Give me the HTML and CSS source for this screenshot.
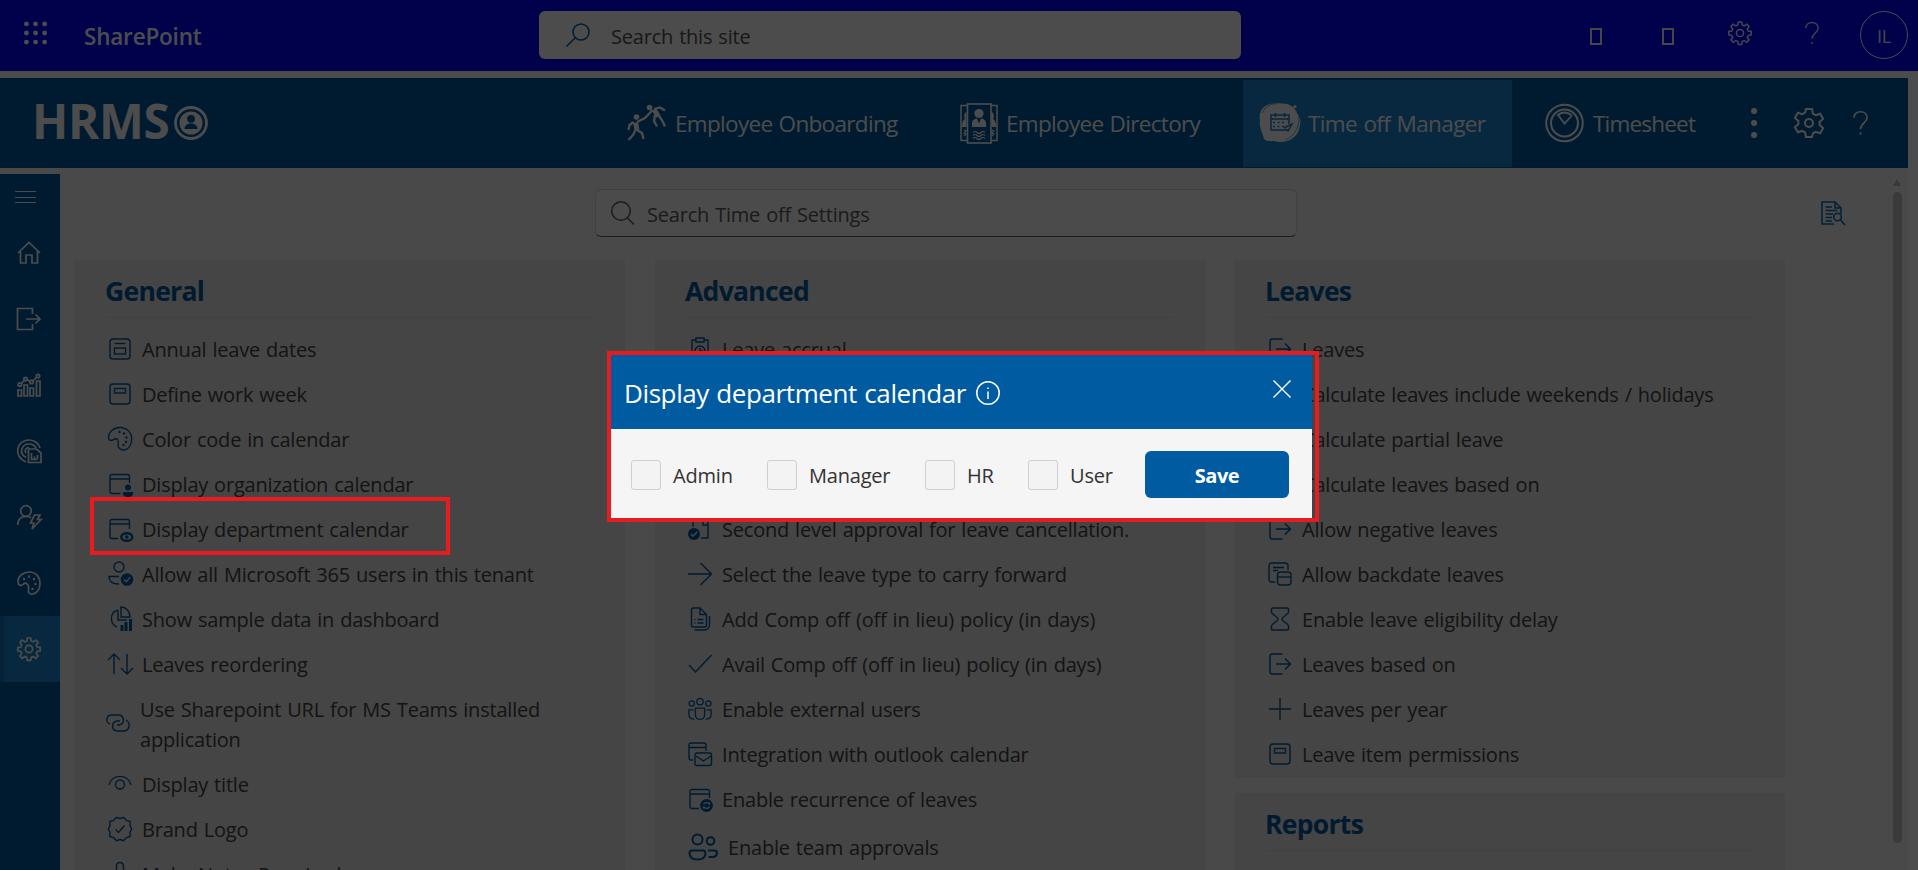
FILE: index.html
```html
<!DOCTYPE html>
<html lang="en">
<head>
<meta charset="utf-8">
<title>Time off Settings</title>
<link rel="stylesheet" href="styles.css">
</head>
<body>
<svg class="defs" width="0" height="0">
  <symbol id="gear" viewBox="0 0 24 24"><path d="M10.3 1h3.4l.5 3 2 .9 2.6-1.800 2.300 2.300-1.800 2.600.9 2 3 .5v3.400l-3 .5-.9 2 1.800 2.600-2.300 2.300-2.600-1.800-2 .9-.5 3h-3.400l-.5-3-2-.9-2.600 1.800-2.300-2.300 1.800-2.600-.9-2-3-.5v-3.400l3-.5.9-2-1.800-2.600 2.300-2.300 2.600 1.800 2-.9z"/><circle cx="12" cy="12" r="3.600"/></symbol>
  <symbol id="cog" viewBox="0 0 30 30"><path d="M12 1h6l.9 4.600 2.800 1.600 4.400-1.500 3 5.200-3.500 3v3.200l3.500 3-3 5.200-4.400-1.500-2.800 1.600L18 29h-6l-.9-4.600-2.800-1.600-4.400 1.500-3-5.200 3.500-3v-3.200l-3.500-3 3-5.200 4.400 1.500 2.800-1.600z"/><circle cx="15" cy="15" r="4"/></symbol>
  <symbol id="help" viewBox="0 0 16 26"><path d="M1 7.500C1 3.500 4 1 8 1s7 2.500 7 6.500c0 5-7 6-7 12"/><path d="M8 23v2.500"/></symbol>
  <symbol id="exit" viewBox="0 0 24 24"><path d="M14.500 2H4.500a2.500 2.500 0 0 0-2.500 2.500v15a2.500 2.500 0 0 0 2.500 2.500h10M8 12h14.500M17 6.500l5.500 5.500-5.500 5.500"/></symbol>
  <symbol id="page-lines" viewBox="0 0 24 24"><rect x="2" y="2" width="20" height="20" rx="3"/><path d="M6.500 6.500h11"/><rect x="6.500" y="11" width="11" height="6"/></symbol>
  <symbol id="page-box" viewBox="0 0 24 24"><rect x="2" y="2" width="20" height="20" rx="3"/><rect x="6.500" y="6.500" width="11" height="4.500"/></symbol>
  <symbol id="palette" viewBox="0 0 24 24"><path d="M.5 11C.5 5 5.500.5 12 .5 18.500.5 24 5.500 23.700 12.500c-.3 6.500-4 11-9 10.500-3.700-.5-5.200-3.500-4.500-6.500.7-3.500-1-5.500-3.500-4.500-1.500.7-2 1.500-3.500 1.500S.5 12.500.5 11z"/><path class="dots" d="M11.500 5v.1M16 6.500v.1M18.500 10.500v.1M18 15v.1M15.500 18v.1"/></symbol>
  <symbol id="palette-side" viewBox="0 0 24 24"><path d="M1 11C1 5 6 1 12.500 1 19 1 23 6 23 13c0 6-4 10.500-9 10-4-.5-2-4-2.500-7.500-.5-3-3-4.500-5-2.500-2.500 2.500-5.500 1.500-5.500-2z"/><path class="dots" d="M7 8v.1M12 5.500v.1M17 8v.1M18.500 13v.1M15.500 18v.1"/></symbol>
  <symbol id="cal-person" viewBox="0 0 24 24"><path d="M12.500 21.500H4a2 2 0 0 1-2-2v-15a2 2 0 0 1 2-2h15.500a2 2 0 0 1 2 2V11M2 7h19.500"/><path class="solid" d="M20 12.500a3 3 0 1 1 0 6 3 3 0 0 1 0-6zM15 20h10v2c0 4-10 4-10 0z"/></symbol>
  <symbol id="cal-eye" viewBox="0 0 24 24"><path d="M10 21.500H4a2 2 0 0 1-2-2v-15a2 2 0 0 1 2-2h15.500a2 2 0 0 1 2 2V12M2 7h19.500"/><ellipse cx="18.800" cy="20" rx="5.500" ry="3.800" stroke-width="2.400"/><circle class="solid" cx="18.800" cy="20" r="1.800"/></symbol>
  <symbol id="person-check" viewBox="0 0 24 24"><circle cx="11" cy="5" r="5"/><path d="M11 22C5 22 1 20 1 14.500h10"/><circle class="solid" cx="19" cy="17.500" r="6.300"/><path class="cut" d="m16 17.500 2.200 2.200 4-4.500"/></symbol>
  <symbol id="pie-bars" viewBox="0 0 24 24"><path d="M10 3a9 9 0 0 0-1 17M13 0v10h9C22 4 18 0 13 0zM10 3v10h9"/><path d="M14 24v-6M18 24v-9M22.500 24V12" stroke-width="3"/></symbol>
  <symbol id="updown" viewBox="0 0 24 24"><path d="M6 22V2M0 8l6-6 6 6M19 2v20M13 16l6 6 6-6"/></symbol>
  <symbol id="link" viewBox="0 0 24 24"><path d="M4 13C-1 11 0 4 6 4h6c7 0 7 9 1 10h-2M20 9c5 3 4 11-3 11h-5C5 20 5 11 11 10h3"/></symbol>
  <symbol id="eye" viewBox="0 0 24 24"><path d="M1 13C4 1.500 20 1.500 23 13"/><circle cx="12" cy="12.500" r="4.500"/></symbol>
  <symbol id="badge" viewBox="0 0 24 24"><path stroke-linejoin="round" d="m12 1.500 3.500-1.200 2.800 3 4 1.200-.3 4.300 1.700 3.200-1.700 3.200.3 4.300-4 1.200-2.800 3L12 22.500l-3.500 1.200-2.800-3-4-1.200.3-4.300L.3 12 2 8.800l-.3-4.300 4-1.200 2.800-3z"/><path d="m7.500 12.500 3 3 6-7"/></symbol>
  <symbol id="note" viewBox="0 0 24 24"><path d="M8.500 24V4a3.500 3.500 0 0 1 7 0v20"/></symbol>
  <symbol id="clip-clock" viewBox="0 0 24 24"><path d="M8 3H4v20h16V3h-4M8 1h8v4H8z"/><circle cx="12" cy="14" r="5"/><path d="M12 11v3h3"/></symbol>
  <symbol id="check-page" viewBox="0 0 24 24"><path d="M5 10V3h15v18h-7M15 3v5h5"/><circle class="solid" cx="6" cy="17" r="6"/><path class="cut" d="m3 17 2.200 2.200 4-4.500"/></symbol>
  <symbol id="arrow" viewBox="0 0 24 24"><path d="M0 12h23.500M12.500 1 23.500 12 12.500 23"/></symbol>
  <symbol id="pages" viewBox="0 0 24 24"><path d="M5.500 1H12l6.500 6.500V18a2 2 0 0 1-2 2h-11a2 2 0 0 1-2-2V3a2 2 0 0 1 2-2zM12 1v6.500h6.500M21.500 9v9a5 5 0 0 1-5 5H6.500M9.500 12.500h6M9.500 16h6M6.500 12.500h1M6.500 16h1"/></symbol>
  <symbol id="check" viewBox="0 0 24 24"><path d="m1 13 6.500 7L23.500 3"/></symbol>
  <symbol id="group" viewBox="0 0 26 24"><circle cx="13" cy="4" r="3.500"/><circle cx="4" cy="6" r="2.800"/><circle cx="22" cy="6" r="2.800"/><path d="M8 11h10v7c0 7-10 7-10 0zM6 13H1v5c0 4 3 5 6 5M20 13h5v5c0 4-3 5-6 5"/></symbol>
  <symbol id="cal-mail" viewBox="0 0 24 24"><path d="M5 18H3a2 2 0 0 1-2-2V3a2 2 0 0 1 2-2h13a2 2 0 0 1 2 2v6M1 5.500h17"/><rect x="7" y="11" width="16.500" height="12.500" rx="2"/><path d="m8 14 7.500 5 7.500-5"/></symbol>
  <symbol id="cal-sync" viewBox="0 0 24 24"><path d="M11 21.500H4a2 2 0 0 1-2-2v-15a2 2 0 0 1 2-2h15.500a2 2 0 0 1 2 2V11M2 7h19.500"/><circle class="solid" cx="18.500" cy="18.500" r="6.400"/><path class="cut" d="M15.500 17.500c1-2.500 5-2.500 6 0v-2M21.500 19.500c-1 2.500-5 2.500-6 0v2"/></symbol>
  <symbol id="team" viewBox="0 0 30 28"><circle cx="9.500" cy="6.500" r="5"/><circle cx="22.500" cy="8" r="3.800"/><path d="M4 17.500h11a2.500 2.500 0 0 1 2.500 2.500c0 4-3 6.500-8 6.500S1.500 24 1.500 20A2.500 2.500 0 0 1 4 17.500zM20 17.500h6.500a2.500 2.500 0 0 1 2.500 2.500c0 3.500-3 4.500-8.500 4"/></symbol>
  <symbol id="date-back" viewBox="0 0 24 24"><path d="M7 20H3.500A2.500 2.500 0 0 1 1 17.500v-14A2.500 2.500 0 0 1 3.500 1h14A2.500 2.500 0 0 1 20 3.500V8M5 5.500h11M5 8.500h5"/><rect x="9.500" y="10" width="13.500" height="13" rx="3"/><path d="M9.500 15H23"/></symbol>
  <symbol id="hourglass" viewBox="0 0 24 24"><path stroke-linejoin="round" d="M4.500 1h15a1 1 0 0 1 1 1v3c0 3-6.500 4-6.500 7s6.500 4 6.500 7v3a1 1 0 0 1-1 1h-15a1 1 0 0 1-1-1v-3c0-3 6.500-4 6.500-7S3.500 8 3.500 5V2a1 1 0 0 1 1-1z"/></symbol>
  <symbol id="plus" viewBox="0 0 24 24"><path d="M12 1v22M1 12h22"/></symbol>
</svg>

<header class="suite">
  <svg class="waffle" viewBox="0 0 24 24"><path d="M2.500 2.500h.1M12 2.500h.1M21.500 2.500h.1M2.500 12h.1M12 12h.1M21.500 12h.1M2.500 21.500h.1M12 21.500h.1M21.500 21.500h.1"/></svg>
  <div class="product">SharePoint</div>
  <div class="site-search"><svg class="i24" viewBox="0 0 24 24"><circle cx="15" cy="9" r="8"/><path d="M9.500 14.500.5 23.500"/></svg><span>Search this site</span></div>
  <div class="suite-tools">
    <i class="tofu"></i><i class="tofu second"></i>
    <svg class="i24 t-gear"><use href="#gear"/></svg>
    <svg class="t-help"><use href="#help"/></svg>
    <div class="avatar">IL</div>
  </div>
</header>

<nav class="hrms">
  <div class="logo"><span>HRMS</span><svg viewBox="0 0 34 34"><circle cx="17" cy="17" r="15.500" fill="none" stroke="#fff" stroke-width="2.800"/><circle cx="17" cy="17" r="11.500" fill="#fff" stroke="none"/><circle cx="17" cy="12.800" r="3.900" fill="#005ba1" stroke="none"/><path d="M10.500 23c-.5-7.500 13.500-7.500 13 0z" fill="#005ba1" stroke="none"/></svg></div>
  <a class="tab onboarding"><svg viewBox="0 0 40 38"><g fill="#fff" stroke="none"><circle cx="22.500" cy="3.500" r="2.800"/><circle cx="9.500" cy="13" r="2.800"/></g><path d="M8.500 18.500 10 26M27 5.500l4.500 7" stroke-width="5"/><path d="m9 25-3 6-4.500 5M10 26l5 3 1.500 6M6.500 18l-4 3-1 5M10 18l8-4 7.500-8M27 5l6-1.500 5 3M28 11l-1 6 3 5.500M32 12l3.500 5 2.500 5.500" stroke-width="2.300"/></svg><span>Employee Onboarding</span></a>
  <a class="tab directory"><svg viewBox="0 0 38 41"><path d="M7 2.500H1v35h6M31 2.500h6v35h-6" stroke-width="1.500"/><rect x="7.500" y="1" width="23.500" height="39" stroke-width="1.600"/><g fill="#fff" stroke="none"><circle cx="19" cy="10.500" r="4.600"/><path d="M12 24v-4c0-3 3-4.500 5-4.500l2 5 2-5c2 0 5 1.500 5 4.500v4zM6.500 9C3.500 10 4 15 5 16c-2 1-3 3-3 8h4.500zM31.500 9c3 1 2.500 6 1.500 7 2 1 3 3 3 8h-4.500z"/></g><path d="M13 29.500q2-2 4 0t4 0 4 0M13 32.500q2-2 4 0t4 0 4 0M13 35.500q2-2 4 0t4 0 4 0M4 27l2 1-2 2 2 1-2 2M32 27l2 1-2 2 2 1-2 2" stroke-width="1.100"/></svg><span>Employee Directory</span></a>
  <a class="tab timeoff"><svg viewBox="0 0 42 40"><path d="M8 2C1 6 0 12 1 18c-1 8 3 12 4 18 3 3 7 2 10 2 12 4 24-4 25-12 2-6 2-10-1-14C36 4 31 0 22 .5 17 0 12 0 8 2z" fill="#fff" stroke="none"/><circle cx="36" cy="3.500" r="1.600" fill="#fff" stroke="none"/><path d="M3 10C7 2 14 0 18 1M39.500 13c2 8-3 20-13 24" stroke="#1b82cf" stroke-width=".7"/><path d="M28 27H12V12h18v9M12 16h18M16.500 10v4M25.500 10v4M14 19.500h2M18.500 19.500h2M23 19.500h2M14 23.500h2M18.500 23.500h2M23 23.500h2M25 25l8-4-4 7-2-2" stroke="#1b82cf" stroke-width="1.500"/></svg><span>Time off Manager</span></a>
  <a class="tab timesheet"><svg viewBox="0 0 39 40"><circle cx="19.500" cy="20" r="18.300"/><circle cx="19.500" cy="20" r="13.500" stroke-width="2"/><path d="M12 12.500q7.500-6 15 0M13 12l6.500 8.500L26.500 13" stroke-width="1.800"/></svg><span>Timesheet</span></a>
  <svg class="more" viewBox="0 0 8 32"><path d="M4 4h.1M4 16h.1M4 28h.1"/></svg>
  <svg class="n-cog"><use href="#cog"/></svg>
  <svg class="n-help"><use href="#help"/></svg>
</nav>

<div class="workspace">
  <aside class="side">
    <div class="burger"></div>
    <a><svg viewBox="0 0 24 24"><path d="M1 12 12 1.500 23 12M3.500 10v12H9v-8h6v8h5.500V10"/></svg></a>
    <a><svg viewBox="0 0 24 24"><path d="M15.500 7V1.500h-15v21h15V17M9 12h14M18.500 7.500 23 12l-4.500 4.500"/></svg></a>
    <a><svg viewBox="0 0 24 24"><path d="M1 23v-6h3.500v6zM7 23V12h3.500v11zM13 23v-8h3.500v8zM19.500 23V8H23v15zM3 12l5.500-6L14.500 9 21 3" /><g class="node"><circle cx="2.800" cy="11.500" r="1.700"/><circle cx="8.500" cy="6" r="1.700"/><circle cx="14.500" cy="9" r="1.700"/><circle cx="21" cy="3" r="1.700"/></g></svg></a>
    <a><svg viewBox="0 0 24 24"><path d="M9 23C-4 18-1 1 12 1c6 0 10 4 11 8M9 18.500C1 14 5 5 12 5c4 0 6 2 7 4M9 14c-2-3 0-5.500 3-5.500"/><path d="M11.500 10h8l4.500 4v9.500H11.500zM14.500 14v6.500h6M17.500 20v-2.500M20.500 20v-4"/></svg></a>
    <a><svg viewBox="0 0 24 24"><circle cx="9" cy="6" r="5.300"/><path d="M.8 20c0-6 4-8.700 8.200-8.700 2 0 3.500.5 5 1.500M17.500 10h5.500l-2.500 4.500H24L15 24l2-6h-3.500z"/></svg></a>
    <a><svg><use href="#palette-side"/></svg></a>
    <a class="on"><svg><use href="#gear"/></svg></a>
  </aside>

  <main>
    <div class="tools">
      <div class="find"><svg class="i24" viewBox="0 0 24 24"><circle cx="10" cy="10" r="9.300"/><path d="m16.500 17 6.500 6.500"/></svg><span>Search Time off Settings</span></div>
      <svg class="audit" viewBox="0 0 24 24"><path d="M13 23H1V1h13l6 6v6M14 1v6h6M4.500 6H11M4.500 9.500h12M4.500 13H12M4.500 16.500H11M4.500 20H11"/><circle cx="16.500" cy="16" r="3.800"/><path d="m19.500 19 4.500 5"/></svg>
    </div>
    <div class="cols">
      <section class="panel tall">
        <h2>General</h2>
        <ul>
          <li><svg><use href="#page-lines"/></svg>Annual leave dates</li>
          <li><svg><use href="#page-box"/></svg>Define work week</li>
          <li><svg><use href="#palette"/></svg>Color code in calendar</li>
          <li><svg><use href="#cal-person"/></svg>Display organization calendar</li>
          <li><svg><use href="#cal-eye"/></svg>Display department calendar</li>
          <li><svg><use href="#person-check"/></svg>Allow all Microsoft 365 users in this tenant</li>
          <li><svg><use href="#pie-bars"/></svg>Show sample data in dashboard</li>
          <li><svg><use href="#updown"/></svg>Leaves reordering</li>
          <li class="double"><svg><use href="#link"/></svg><span>Use Sharepoint URL for MS Teams installed<br>application</span></li>
          <li><svg><use href="#eye"/></svg>Display title</li>
          <li><svg><use href="#badge"/></svg>Brand Logo</li>
          <li><svg><use href="#note"/></svg>Make Notes Required</li>
        </ul>
      </section>
      <section class="panel tall">
        <h2>Advanced</h2>
        <ul>
          <li><svg><use href="#clip-clock"/></svg>Leave accrual</li>
          <li></li><li></li><li></li>
          <li><svg><use href="#check-page"/></svg>Second level approval for leave cancellation.</li>
          <li><svg><use href="#arrow"/></svg>Select the leave type to carry forward</li>
          <li><svg><use href="#pages"/></svg>Add Comp off (off in lieu) policy (in days)</li>
          <li><svg><use href="#check"/></svg>Avail Comp off (off in lieu) policy (in days)</li>
          <li><svg><use href="#group"/></svg>Enable external users</li>
          <li><svg><use href="#cal-mail"/></svg>Integration with outlook calendar</li>
          <li><svg><use href="#cal-sync"/></svg>Enable recurrence of leaves</li>
          <li class="team"><svg><use href="#team"/></svg>Enable team approvals</li>
        </ul>
      </section>
      <div class="stack">
        <section class="panel">
          <h2>Leaves</h2>
          <ul>
            <li><svg><use href="#exit"/></svg>Leaves</li>
            <li><svg></svg>Calculate leaves include weekends / holidays</li>
            <li><svg></svg>Calculate partial leave</li>
            <li><svg></svg>Calculate leaves based on</li>
            <li><svg><use href="#exit"/></svg>Allow negative leaves</li>
            <li><svg><use href="#date-back"/></svg>Allow backdate leaves</li>
            <li><svg><use href="#hourglass"/></svg>Enable leave eligibility delay</li>
            <li><svg><use href="#exit"/></svg>Leaves based on</li>
            <li><svg><use href="#plus"/></svg>Leaves per year</li>
            <li><svg><use href="#page-box"/></svg>Leave item permissions</li>
          </ul>
        </section>
        <section class="panel tall">
          <h2>Reports</h2>
        </section>
      </div>
    </div>
  </main>
  <div class="scroll"><i class="up"></i><i class="thumb"></i></div>
</div>

<div class="shade"></div>
<div class="mark"></div>
<div class="dialog-frame">
  <div class="dialog">
    <div class="dialog-head">
      <span>Display department calendar</span>
      <svg class="info" viewBox="0 0 24 24"><circle cx="12" cy="12" r="11.200"/><path d="M12 10.500V18M12 6.500v1.500"/></svg>
      <svg class="close" viewBox="0 0 18 18"><path d="m.5.5 17 17M17.500.5l-17 17"/></svg>
    </div>
    <div class="dialog-body">
      <label class="c1"><i></i><span>Admin</span></label>
      <label class="c2"><i></i><span>Manager</span></label>
      <label class="c3"><i></i><span>HR</span></label>
      <label class="c4"><i></i><span>User</span></label>
      <button>Save</button>
    </div>
  </div>
</div>
</body>
</html>
```
FILE: styles.css
```css
* { box-sizing: border-box; }
body {
  margin: 0; width: 1918px; height: 870px; overflow: hidden; position: relative;
  background: #fff; color: #444;
  font-family: "Open Sans", "Noto Sans", sans-serif; font-size: 20px; letter-spacing: -0.2px; word-spacing: 1px;
  display: flex; flex-direction: column;
}
.defs { position: absolute; }
svg { fill: none; stroke: currentColor; stroke-width: 1.5; flex: none; overflow: visible; }
symbol { overflow: visible; }
.solid { fill: currentColor; stroke: none; }
.cut { stroke: #e8e8e8; stroke-width: 1.4; }
.dots { stroke-width: 2.4; stroke-linecap: round; }
.i24 { width: 24px; height: 24px; }

.suite { height: 71px; flex: none; background: #0000fa; color: #fff; display: flex; align-items: flex-start; padding: 11px 10px 0 24px; }
.waffle { width: 23px; height: 24px; margin-top: 10px; stroke-width: 5; stroke-linecap: round; }
.product { width: 118px; margin: 0 337px 0 37px; font-size: 22.500px; font-weight: 600; line-height: 52px; letter-spacing: -0.2px; }
.site-search { width: 702px; height: 48px; border-radius: 6px; background: #fff; color: #505050; display: flex; align-items: center; padding-left: 27px; gap: 21px; }
.site-search svg { color: #005ba1; }
.site-search span, .find span { padding-top: 2px; }
.suite-tools { margin-left: auto; display: flex; align-items: flex-start; color: #ececec; }
.tofu { width: 12px; height: 17px; border: 2px solid #ececec; margin-top: 17px; }
.second { margin-left: 60px; }
.t-gear { margin: 10px 0 0 54px; }
.t-help { width: 14px; height: 24px; margin: 10px 0 0 53px; }
.avatar { width: 48px; height: 48px; border: 1px solid #fff; border-radius: 50%; margin-left: 41px; text-align: center; font-size: 18px; line-height: 48px; }

.hrms { flex: none; height: 90px; width: 1908px; margin-top: 7px; background: #005ba1; color: #fff; display: flex; align-items: center; font-size: 22.500px; }
.logo { display: flex; align-items: center; margin-left: 32px; width: 567px; gap: 5px; }
.logo span { font-size: 47.500px; font-weight: 700; line-height: 86px; letter-spacing: -0.3px; width: 137px; padding-bottom: 4px; }
.logo svg { width: 34px; height: 34px; }
.tab { display: flex; align-items: center; height: 87px; white-space: nowrap; letter-spacing: -0.68px; }
.tab svg { stroke-width: 2; }
.onboarding { padding-left: 28px; width: 333px; gap: 8px; }
.onboarding svg { width: 40px; height: 38px; }
.directory { padding-left: 28px; width: 311px; gap: 8px; }
.directory svg { width: 38px; height: 41px; }
.timeoff { width: 269px; padding-left: 16px; gap: 7px; background: #1b86d3; letter-spacing: -0.6px; }
.timeoff svg { width: 42px; height: 40px; }
.timesheet { width: 238px; padding-left: 33px; gap: 9px; letter-spacing: -0.8px; }
.timesheet svg { width: 39px; height: 40px; }
.more { width: 8px; height: 32px; stroke-width: 6; stroke-linecap: round; }
.n-cog { width: 30px; height: 30px; margin-left: 36px; stroke-width: 2; }
.n-help { width: 15px; height: 26px; margin-left: 29px; stroke-width: 1.800; }

.workspace { flex: 1; min-height: 0; display: flex; width: 1908px; background: #f3f3f3; }
.side { width: 60px; margin-top: 6px; background: #005ba1; color: #fff; flex: none; }
.side a { height: 66px; display: flex; align-items: center; padding-left: 17px; }
.side svg { width: 24px; height: 24px; stroke-width: 1.700; }
.node circle { fill: #005ba1; }
.side .on { background: #1b86d3; border-left: 4px solid #1774ba; padding-left: 13px; }
.burger { width: 21px; height: 12px; margin: 17px 0 17px 15px; border: solid #fff; border-width: 1px 0; background: linear-gradient(#fff, #fff) 0 50% / 100% 1px no-repeat; }

main { flex: 1; min-width: 0; padding-left: 15px; }
.tools { display: flex; align-items: center; height: 48px; margin: 21px 0 23px 520px; }
.find { width: 702px; height: 48px; border: 1px solid #d6d6d6; border-bottom: 1.500px solid #606060; border-radius: 6px; background: #fafafa; color: #5c5c5c; display: flex; align-items: center; padding-left: 15px; gap: 12px; }
.audit { width: 24px; height: 24px; margin-left: 524px; color: #0f6cbd; stroke-width: 1.600; }
.cols { display: grid; grid-template-columns: 550px 550px 550px; gap: 30px; height: 610px; }
.panel { background: #e6e6e6; padding: 0 30px 1px; }
.stack { display: flex; flex-direction: column; gap: 15px; min-height: 0; }
.stack .tall { flex: 1; }
h2 { margin: 0 0 9px; height: 58px; line-height: 62px; font-size: 26.500px; font-weight: 700; color: #005ba1; border-bottom: 1px solid #dadada; letter-spacing: -0.7px; }
ul { list-style: none; margin: 0; padding: 0; }
li { height: 45px; padding-left: 3px; display: flex; align-items: center; gap: 10px; white-space: nowrap; }
li svg { width: 24px; height: 24px; color: #005ba1; stroke-width: 1.400; position: relative; top: -1px; }
.double { height: 75px; line-height: 30px; padding-left: 1px; }
.double svg { top: -2px; }
.team { height: 51px; }
.team svg { width: 30px; height: 28px; stroke-width: 2; }
.scroll { width: 15px; padding-top: 11px; display: flex; flex-direction: column; align-items: flex-start; }
.up { border: 4.500px solid transparent; border-top: 0; border-bottom: 7px solid #bdbdbd; }
.thumb { width: 9px; height: 651px; margin-top: 6px; border-radius: 5px; background: #c4c4c4; }

.shade { position: absolute; inset: 0; background: rgba(0, 0, 0, .7); }
.mark { position: absolute; left: 90px; top: 497px; width: 360px; height: 58px; border: 4px solid #e81c1f; }
.dialog-frame { position: absolute; left: 607px; top: 351px; width: 712px; height: 171px; border: 4px solid #e81c1f; padding-right: 3px; }
.dialog { height: 163px; background: #f5f5f5; }
.dialog-head { height: 74px; background: #005ba1; color: #fff; display: flex; align-items: center; padding: 2px 21px 0 13px; font-size: 26px; letter-spacing: -0.4px; }
.info { width: 24px; height: 24px; margin-left: 10px; }
.close { width: 18px; height: 18px; margin: -9px 0 0 auto; stroke-width: 1.400; }
.dialog-body { height: 89px; display: flex; align-items: center; padding: 2px 22px 0 20px; color: #333; }
label { display: flex; align-items: center; gap: 12px; }
label span { padding-top: 2px; }
label i { width: 30px; height: 30px; background: #f3f3f3; border: 1.500px solid #d0d0d0; border-radius: 3px; }
.c1 { width: 136px; } .c2 { width: 158px; } .c3 { width: 103px; } .c4 { width: 117px; }
button { width: 144px; height: 47px; border: 0; border-radius: 6px; background: #005ba1; color: #fff; font: 700 20px "Open Sans", sans-serif; letter-spacing: -0.5px; padding-top: 3px; }
```
